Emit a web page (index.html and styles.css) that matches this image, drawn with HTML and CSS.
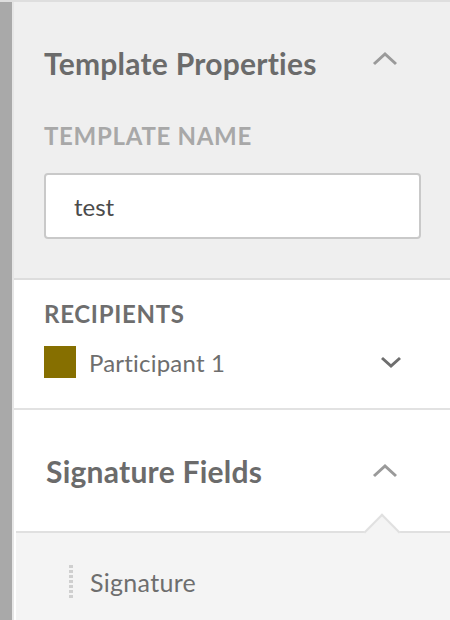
FILE: index.html
```html
<!DOCTYPE html>
<html>
<head>
<meta charset="utf-8">
<link rel="stylesheet" href="styles.css">
</head>
<body>
<div class="app">
  <div class="rail"></div>
  <div class="rail-edge"></div>
  <div class="panel">
    <section class="props">
      <div class="header">
        <h2 class="title">Template Properties</h2>
        <svg class="chev chev-light chev-up-top" width="26" height="16" viewBox="0 0 26 16"><polyline points="2,13 13,3 24,13" fill="none" stroke-width="3"/></svg>
      </div>
      <div class="label label-light">TEMPLATE NAME</div>
      <div class="input">test</div>
    </section>
    <section class="recipients">
      <div class="label">RECIPIENTS</div>
      <div class="recipient">
        <span class="swatch"></span>
        <span class="name">Participant 1</span>
        <svg class="chev chev-dark" width="22" height="14" viewBox="0 0 22 14"><polyline points="2,3 11,11 20,3" fill="none" stroke-width="3"/></svg>
      </div>
    </section>
    <section class="fields">
      <div class="header header-fields">
        <h2 class="title">Signature Fields</h2>
        <svg class="chev chev-light" width="26" height="16" viewBox="0 0 26 16"><polyline points="2,13 13,3 24,13" fill="none" stroke-width="3"/></svg>
      </div>
      <div class="list">
        <div class="notch"></div>
        <div class="item">
          <span class="handle"></span>
          <span class="item-name">Signature</span>
        </div>
      </div>
    </section>
  </div>
</div>
</body>
</html>
```

FILE: styles.css
```css
* { box-sizing: border-box; }
html, body { margin: 0; padding: 0; }
body {
  width: 450px;
  height: 620px;
  overflow: hidden;
  background: #ffffff;
  font-family: Lato, "Open Sans", sans-serif;
  color: #6e6e6e;
}
.app {
  display: flex;
  height: 620px;
  border-top: 2px solid #dedede;
}
.rail {
  width: 12px;
  background: #a9a9a9;
}
.rail-edge {
  width: 2px;
  background: #e6e6e6;
}
.panel {
  flex: 1;
  display: flex;
  flex-direction: column;
}
.props {
  background: #efefef;
  padding: 0 29px 39px 30px;
  border-bottom: 2px solid #dddddd;
}
.header {
  height: 122px;
  display: flex;
  align-items: center;
  justify-content: space-between;
}
.title {
  margin: 0;
  font-size: 30px;
  line-height: 36px;
  font-weight: 700;
  color: #6b6b6b;
  letter-spacing: 0.25px;
}
.chev { display: block; }
.chev-light { stroke: #9a9a9a; margin-right: 23px; }
.chev-up-top { margin-bottom: 8px; }
.chev-dark { stroke: #6e6e6e; margin-right: 19px; margin-left: auto; }
.label {
  font-size: 24px;
  line-height: 24px;
  font-weight: 700;
  color: #6e6e6e;
  letter-spacing: 0.7px;
}
.label-light { color: #a8a8a8; }
.input {
  margin-top: 25px;
  height: 66px;
  background: #ffffff;
  border: 2px solid #c9c9c9;
  border-radius: 4px;
  padding-left: 28px;
  display: flex;
  align-items: center;
  font-size: 24px;
  color: #4b4b4b;
}
.recipients {
  padding: 22px 29px 30px 30px;
  border-bottom: 2px solid #e2e2e2;
}
.recipient {
  margin-top: 20px;
  height: 32px;
  display: flex;
  align-items: center;
}
.swatch {
  width: 32px;
  height: 32px;
  background: #866f00;
}
.name {
  margin-left: 13px;
  font-size: 24px;
  color: #6e6e6e;
  letter-spacing: 0.2px;
}
.fields { flex: 1; display: flex; flex-direction: column; }
.header-fields {
  padding: 0 29px 0 32px;
  height: 121px;
}
.list {
  position: relative;
  flex: 1;
  margin-left: 2px;
  background: #f4f4f4;
  border-top: 2px solid #e0e0e0;
}
.notch {
  position: absolute;
  top: -14px;
  left: 353px;
  width: 26px;
  height: 26px;
  background: #f4f4f4;
  border-top: 2px solid #e0e0e0;
  border-left: 2px solid #e0e0e0;
  transform: rotate(45deg);
}
.item {
  display: flex;
  align-items: center;
  padding: 32px 0 0 53px;
}
.handle {
  width: 4px;
  height: 34px;
  background: repeating-linear-gradient(to bottom, #cfcfcf 0 3px, transparent 3px 5px);
}
.item-name {
  margin-left: 17px;
  font-size: 25px;
  color: #6e6e6e;
  letter-spacing: 0.3px;
}
```
